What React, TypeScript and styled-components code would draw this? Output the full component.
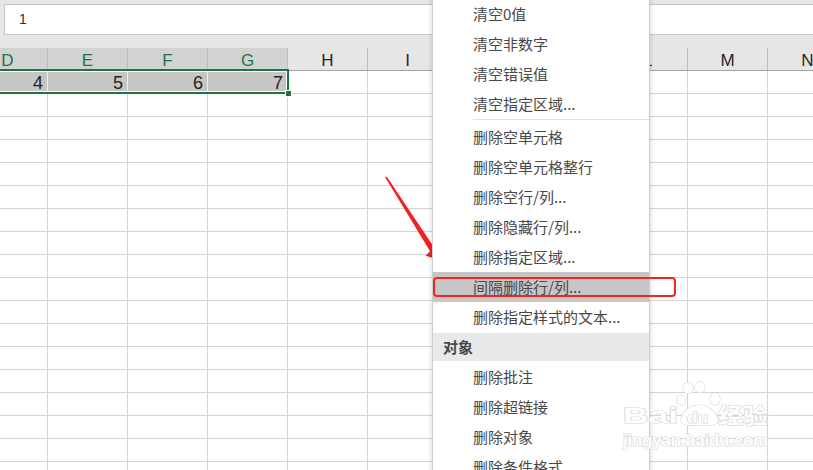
import styled, { createGlobalStyle } from 'styled-components';

const GlobalStyle = createGlobalStyle`
  html,
  body {
    margin: 0;
    padding: 0;
    background: #fff;
  }
  body {
    width: 813px;
    height: 470px;
    overflow: hidden;
    font-family: 'Liberation Sans', Arial, sans-serif;
  }
`;

const Page = styled.div`
  position: relative;
  width: 813px;
  height: 470px;
  overflow: hidden;
  background: #fff;
`;

const FormulaBar = styled.div`
  height: 48px;
  box-sizing: border-box;
  padding: 4px 0 0 4px;
  background: #e6e6e6;
`;

const FormulaInput = styled.div`
  width: calc(100% + 10px);
  height: 31px;
  box-sizing: border-box;
  border: 1px solid #c8c8c8;
  background: #fff;
  padding-left: 14px;
  font-size: 14px;
  line-height: 29px;
  color: #333;
`;

const Sheet = styled.div`
  position: relative;
  margin-left: -32px;
`;

const HeaderRow = styled.div`
  display: flex;
  height: 23px;
  box-sizing: border-box;
  border-bottom: 1px solid #a3a3a3;
  background: #e6e6e6;
`;

const HeaderCell = styled.div<{ $selected?: boolean }>`
  flex: 0 0 80px;
  box-sizing: border-box;
  border-right: 1px solid #bdbdbd;
  display: flex;
  align-items: center;
  justify-content: center;
  padding-top: 3px;
  font-size: 17px;
  background: ${(p) => (p.$selected ? '#d2d2d2' : '#e6e6e6')};
  color: ${(p) => (p.$selected ? '#217346' : '#262626')};
`;

const Row = styled.div`
  display: flex;
  height: 23px;
  box-sizing: border-box;
  border-bottom: 1px solid #d4d4d4;
`;

const Cell = styled.div<{ $selected?: boolean }>`
  flex: 0 0 80px;
  box-sizing: border-box;
  border-right: 1px solid ${(p) => (p.$selected ? '#eeeeee' : '#d4d4d4')};
  background: ${(p) => (p.$selected ? '#c6c6c6' : '#fff')};
  text-align: right;
  padding: 2px 4px 0 0;
  font-size: 18px;
  line-height: 20px;
  color: #222;
`;

const Selection = styled.div`
  position: absolute;
  left: -10px;
  top: 21px;
  width: 331px;
  height: 25px;
  box-sizing: border-box;
  border: 2px solid #217346;
  box-shadow: inset 0 0 0 1px #fff;
`;

const FillHandle = styled.span`
  position: absolute;
  right: -5px;
  bottom: -5px;
  width: 5px;
  height: 5px;
  background: #217346;
  border: 1px solid #fff;
`;

const Menu = styled.div`
  position: absolute;
  left: 432px;
  top: -1px;
  width: 218px;
  box-sizing: border-box;
  background: #fff;
  border-left: 1px solid #cdcdcd;
  border-right: 1px solid #cdcdcd;
  box-shadow: 0 0 5px rgba(0, 0, 0, 0.18);
  font-family: 'Noto Sans CJK SC', 'Microsoft YaHei', sans-serif;
`;

const MenuItem = styled.div<{ $active?: boolean }>`
  position: relative;
  height: 30px;
  line-height: 30px;
  padding-left: 40px;
  font-size: 15px;
  color: #484848;
  white-space: nowrap;
  background: ${(p) => (p.$active ? '#c6c6c6' : 'transparent')};
`;

const MenuSeparator = styled.div`
  height: 3px;
  margin-left: 40px;
  box-sizing: border-box;
  border-top: 1px solid #e2e2e2;
`;

const MenuSection = styled.div`
  height: 28px;
  margin: 1px 0;
  line-height: 28px;
  padding-left: 10px;
  background: #e9e9e9;
  font-size: 15px;
  font-weight: bold;
  color: #474747;
`;

const RedMark = styled.span`
  position: absolute;
  left: 0;
  top: 5px;
  width: 243px;
  height: 20px;
  box-sizing: border-box;
  border: 2px solid #f72323;
  border-radius: 4px;
`;

const Overlay = styled.svg`
  position: absolute;
  left: 0;
  top: 0;
  pointer-events: none;
`;

const columns = ['D', 'E', 'F', 'G', 'H', 'I', 'J', 'K', 'L', 'M', 'N'];
// J and K sit fully under the menu, so their letters are never seen
const hiddenCols = ['J', 'K'];
const selectedCols = ['D', 'E', 'F', 'G'];
const firstRow: Record<string, string> = { D: '4', E: '5', F: '6', G: '7' };

type Entry = { kind: 'item' | 'sep' | 'section'; label?: string; active?: boolean };

const menu: Entry[] = [
  { kind: 'item', label: '清空0值' },
  { kind: 'item', label: '清空非数字' },
  { kind: 'item', label: '清空错误值' },
  { kind: 'item', label: '清空指定区域...' },
  { kind: 'sep' },
  { kind: 'item', label: '删除空单元格' },
  { kind: 'item', label: '删除空单元格整行' },
  { kind: 'item', label: '删除空行/列...' },
  { kind: 'item', label: '删除隐藏行/列...' },
  { kind: 'item', label: '删除指定区域...' },
  { kind: 'item', label: '间隔删除行/列...', active: true },
  { kind: 'item', label: '删除指定样式的文本...' },
  { kind: 'section', label: '对象' },
  { kind: 'item', label: '删除批注' },
  { kind: 'item', label: '删除超链接' },
  { kind: 'item', label: '删除对象' },
  { kind: 'item', label: '删除条件格式' },
];

const Watermark = () => (
  <Overlay width={813} height={470} viewBox='0 0 813 470'>
    <g fill='#fff' stroke='#d6d6d6' strokeWidth={1.2} paintOrder='stroke'>
      <text
        x={623}
        y={423}
        fontFamily='Liberation Sans, Arial, sans-serif'
        fontWeight='bold'
        fontSize={22}
        textLength={55}
        lengthAdjust='spacingAndGlyphs'
      >
        Bai
      </text>
      <ellipse cx={681} cy={400} rx={4.5} ry={5.5} />
      <ellipse cx={688} cy={388} rx={5} ry={5.5} />
      <ellipse cx={700} cy={387} rx={5} ry={5.5} />
      <ellipse cx={715} cy={399} rx={5} ry={6} />
      <path d='M699 405 C709 405 718 414 718 420 C718 426 709 425 699 425 C688 425 681 426 681 420 C681 414 689 405 699 405 Z' />
      <text
        x={687}
        y={423}
        fontFamily='Liberation Sans, Arial, sans-serif'
        fontWeight='bold'
        fontSize={14}
        textLength={21}
        lengthAdjust='spacingAndGlyphs'
      >
        du
      </text>
      <text
        x={718}
        y={423}
        fontFamily='Noto Sans CJK SC, sans-serif'
        fontWeight='bold'
        fontSize={21}
        textLength={50}
        lengthAdjust='spacingAndGlyphs'
      >
        经验
      </text>
      <text
        x={623}
        y={446}
        fontFamily='Liberation Sans, Arial, sans-serif'
        fontWeight='bold'
        fontSize={16}
        textLength={145}
        lengthAdjust='spacingAndGlyphs'
      >
        jingyan.baidu.com
      </text>
    </g>
  </Overlay>
);

const Arrow = () => (
  <Overlay width={813} height={470} viewBox='0 0 813 470'>
    <polygon
      fill='#f52020'
      points='385.3,177.6 386.7,176.6 434.2,247.6 438.2,242.8 440.8,260.5 425.6,255.8 430,251.2'
    />
  </Overlay>
);

export default function App() {
  return (
    <>
      <GlobalStyle />
      <Page>
        <FormulaBar>
          <FormulaInput>1</FormulaInput>
        </FormulaBar>
        <Sheet>
          <HeaderRow>
            {columns.map((c) => (
              <HeaderCell key={c} $selected={selectedCols.includes(c)}>
                {hiddenCols.includes(c) ? '' : c}
              </HeaderCell>
            ))}
          </HeaderRow>
          {Array.from({ length: 18 }).map((_, r) => (
            <Row key={r}>
              {columns.map((c) => (
                <Cell key={c} $selected={r === 0 && selectedCols.includes(c)}>
                  {r === 0 ? firstRow[c] ?? '' : ''}
                </Cell>
              ))}
            </Row>
          ))}
          <Selection>
            <FillHandle />
          </Selection>
        </Sheet>
        <Arrow />
        <Menu>
          {menu.map((m, i) => {
            if (m.kind === 'sep') return <MenuSeparator key={i} />;
            if (m.kind === 'section') return <MenuSection key={i}>{m.label}</MenuSection>;
            return (
              <MenuItem key={i} $active={m.active}>
                {m.label}
                {m.active && <RedMark />}
              </MenuItem>
            );
          })}
        </Menu>
        <Watermark />
      </Page>
    </>
  );
}
